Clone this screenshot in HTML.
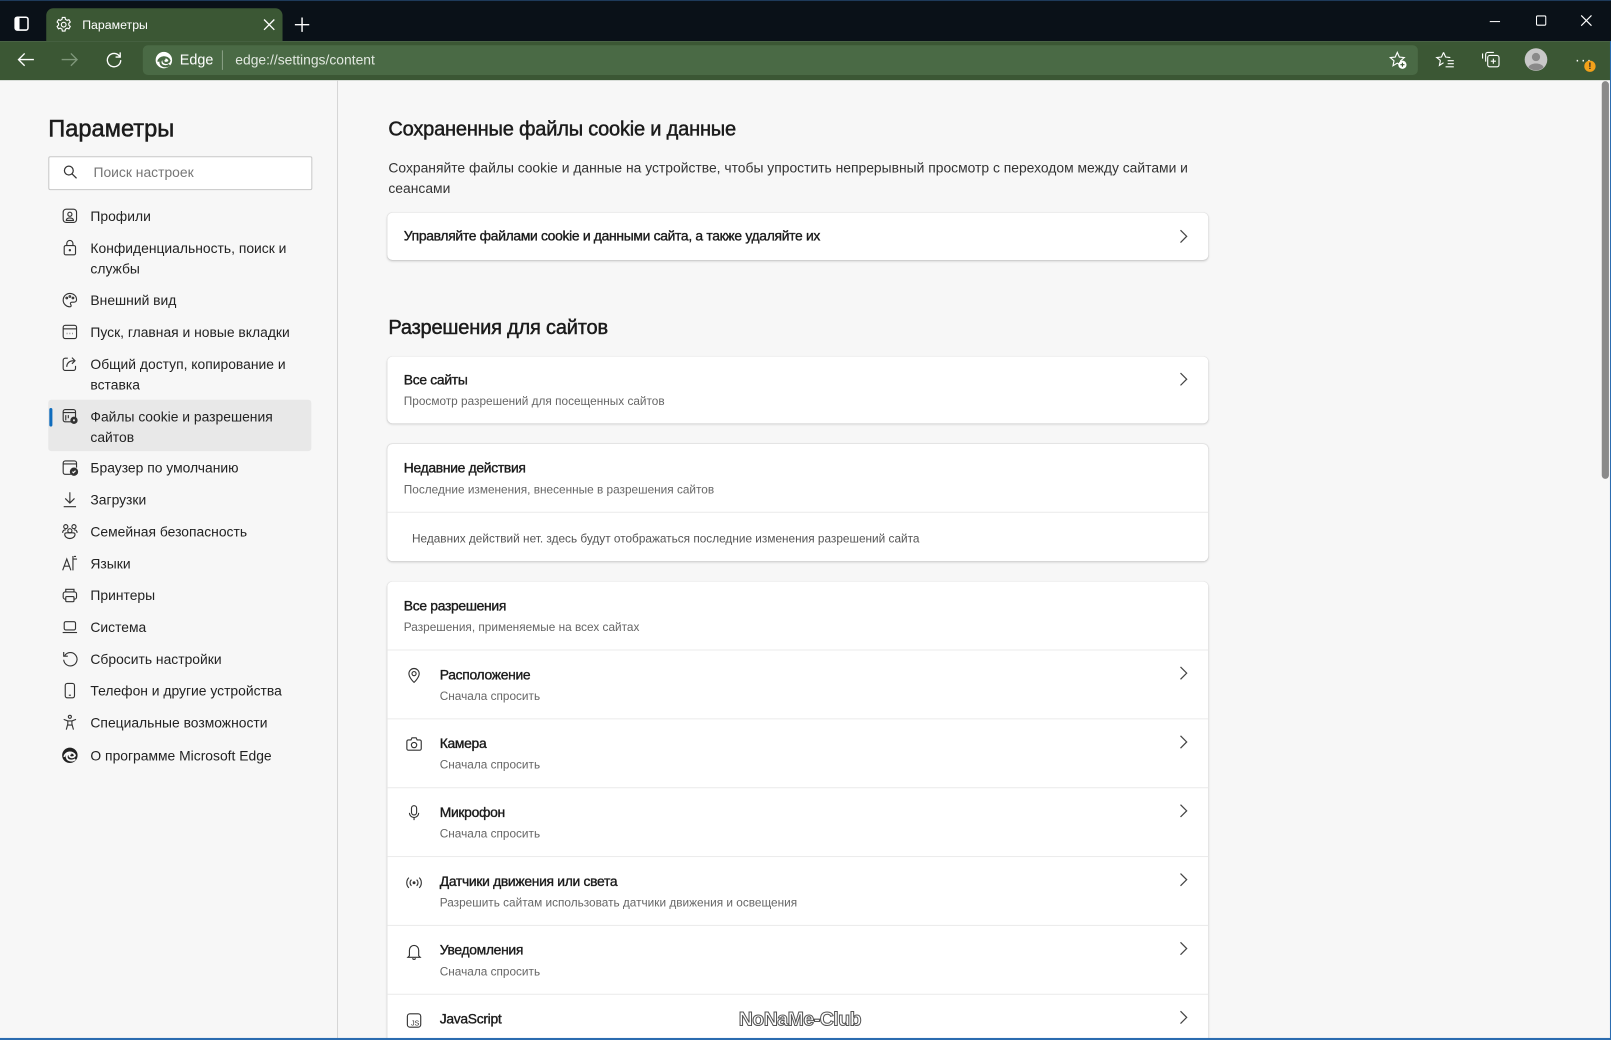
<!DOCTYPE html>
<html><head><meta charset="utf-8">
<style>
html,body{margin:0;padding:0;width:1611px;height:1040px;overflow:hidden;background:#f7f7f7}
#w{position:absolute;left:0;top:0;width:1568px;height:1012px;transform:scale(1.02742,1.02767);transform-origin:0 0;font-family:"Liberation Sans","DejaVu Sans",sans-serif;color:#1b1b1b;background:#f7f7f7;overflow:hidden}
.a{position:absolute}
.tb{left:0;top:0;width:1568px;height:40px;background:#0a1118;border-top:1px solid #1e3a5a;box-sizing:border-box}
.tool{left:0;top:40px;width:1568px;height:38px;background:#3b5734}
.tab{left:45px;top:8px;width:230px;height:32px;background:#3b5734;border-radius:7px 7px 0 0}
.addr{left:139px;top:44px;width:1241px;height:29px;background:#4a6a45;border-radius:5px}
.wt{color:#fff;font-size:12px}
.nav{left:88px;font-size:13.5px;color:#222;line-height:19.5px}
.ic{position:absolute;left:60px;width:16px;height:16px}
.card{position:absolute;left:377px;width:799px;background:#fff;border-radius:5px;box-shadow:0 1px 2px rgba(0,0,0,.14),0 0 1px rgba(0,0,0,.1)}
.t{position:absolute;font-size:13.5px;color:#1b1b1b;font-weight:400;-webkit-text-stroke:.35px #1b1b1b;letter-spacing:-.3px}
.s{position:absolute;font-size:11.5px;color:#666}
.hr{position:absolute;left:0;width:799px;height:1px;background:#ebebeb}
.chev{position:absolute;left:768px;width:12px;height:14px}
.h2{position:absolute;left:378px;font-size:19.5px;font-weight:400;-webkit-text-stroke:.45px #1b1b1b;color:#1b1b1b;letter-spacing:-.2px}
svg{overflow:visible}
</style></head><body><div id="w">
<div class="a tb"></div>
<div class="a tool"></div>
<div class="a tab"></div>
<svg class="a" style="left:14px;top:16px" width="14" height="14"><rect x=".75" y=".75" width="12.5" height="12.5" rx="2" fill="none" stroke="#fff" stroke-width="1.5"/><rect x="1" y="1" width="4" height="12" fill="#fff"/></svg>
<svg class="a" style="left:54px;top:16px" width="16" height="16" fill="none" stroke="#fff" stroke-width="1.1"><circle cx="8" cy="8" r="2.3"/><path d="M6.7 1h2.6l.4 1.9 1.6.9 1.8-.6 1.3 2.2-1.4 1.3v1.8l1.4 1.3-1.3 2.2-1.8-.6-1.6.9-.4 1.9H6.7l-.4-1.9-1.6-.9-1.8.6-1.3-2.2 1.4-1.3V6.7L1.6 5.4l1.3-2.2 1.8.6 1.6-.9z"/></svg>
<div class="a wt" style="left:80px;top:17px">Параметры</div>
<svg class="a" style="left:257px;top:19px" width="10" height="10" stroke="#fff" stroke-width="1.3"><path d="M0 0l10 10M10 0L0 10"/></svg>
<svg class="a" style="left:287px;top:17px" width="14" height="14" stroke="#fff" stroke-width="1.4"><path d="M7 0v14M0 7h14"/></svg>
<svg class="a" style="left:1450px;top:20px" width="10" height="2"><path d="M0 1h10" stroke="#fff"/></svg>
<svg class="a" style="left:1495px;top:15px" width="10" height="10"><rect x=".5" y=".5" width="9" height="9" rx="1" fill="none" stroke="#fff"/></svg>
<svg class="a" style="left:1539px;top:15px" width="10" height="10" stroke="#fff" stroke-width="1.1"><path d="M0 0l10 10M10 0L0 10"/></svg>
<svg class="a" style="left:17px;top:51px" width="16" height="14" fill="none" stroke="#fff" stroke-width="1.3"><path d="M16 7H1M7 1L1 7l6 6"/></svg>
<svg class="a" style="left:60px;top:51px" width="16" height="14" fill="none" stroke="#7f977a" stroke-width="1.3"><path d="M0 7h15M9 1l6 6-6 6"/></svg>
<svg class="a" style="left:103px;top:50px" width="16" height="16" fill="none" stroke="#fff" stroke-width="1.3"><path d="M13.5 5A6.5 6.5 0 1 0 14.5 8.5"/><path d="M14 1v4.5H9.5"/></svg>
<div class="a addr"></div>
<svg class="a" style="left:151px;top:50px" width="17" height="17"><circle cx="8.5" cy="8.5" r="8" fill="#fff"/><path d="M3 10c1-5 9-6 11-1-1 3-6 3-6 0 0-1 1-2 2-2-4-1-6 3-4 6 2 2 6 2 8 0" fill="none" stroke="#4a6a45" stroke-width="2"/></svg>
<div class="a" style="left:175px;top:50px;color:#fff;font-size:14px">Edge</div>
<div class="a" style="left:216px;top:49px;width:1px;height:19px;background:#8aa085"></div>
<div class="a" style="left:229px;top:51px;color:#e2e8e0;font-size:13.5px">edge://settings/content</div>
<svg class="a" style="left:1352px;top:50px" width="18" height="18" fill="none" stroke="#fff" stroke-width="1.1"><path d="M8 1l2 4.5 4.8.5-3.6 3.2 1 4.8L8 11.5 3.8 14l1-4.8L1.2 6 6 5.5z"/><circle cx="13" cy="13" r="4" fill="#fff" stroke="none"/><path d="M13 11v4M11 13h4" stroke="#3b5734"/></svg>
<svg class="a" style="left:1398px;top:50px" width="18" height="16" fill="none" stroke="#fff" stroke-width="1.1"><path d="M7 1l2 4.5 4.6.5M4 8.8l-1 4.8L7 11"/><path d="M7 1L5 5.5.4 6l3.6 2.8"/><path d="M11 9h6M11 12h6M9 15h8"/></svg>
<svg class="a" style="left:1442px;top:49px" width="18" height="18" fill="none" stroke="#fff" stroke-width="1.1"><path d="M4 11V4a2 2 0 0 1 2-2h6"/><path d="M1 8V3"/><rect x="6" y="5" width="11" height="11" rx="2"/><path d="M11.5 8v5M9 10.5h5"/></svg>
<svg class="a" style="left:1484px;top:47px" width="22" height="22"><circle cx="11" cy="11" r="11" fill="#c8c8c8"/><circle cx="11" cy="8.5" r="4" fill="#8a8a8a"/><path d="M3.5 18.5c2-5 13-5 15 0a11 11 0 0 1-15 0z" fill="#8a8a8a"/></svg>
<div class="a" style="left:1533px;top:55px;color:#fff;font-size:14px;letter-spacing:1px;line-height:6px">···</div>
<div class="a" style="left:1542px;top:59px;width:11px;height:11px;border-radius:50%;background:#f2a11a;color:#222;font-size:9px;font-weight:bold;text-align:center;line-height:11px">!</div>
<div class="a" style="left:328px;top:78px;width:1px;height:934px;background:#d6d6d6"></div>
<div class="a" style="left:47px;top:112px;font-size:23px;font-weight:400;-webkit-text-stroke:.5px #1b1b1b;color:#1b1b1b">Параметры</div>
<div class="a" style="left:47px;top:152px;width:255px;height:31px;background:#fff;border:1px solid #c8c8c8;border-radius:2px"></div>
<svg class="a" style="left:62px;top:161px" width="13" height="13" fill="none" stroke="#333" stroke-width="1.2"><circle cx="5" cy="5" r="4.3"/><path d="M8.2 8.2l4.3 4.3"/></svg>
<div class="a" style="left:91px;top:160px;font-size:13.5px;color:#767676">Поиск настроек</div>
<div class="a" style="left:47px;top:389px;width:256px;height:50px;background:#e8e8e8;border-radius:3px"></div>
<div class="a" style="left:48px;top:397px;width:3px;height:18px;background:#0f6cbd;border-radius:2px"></div>

<div class="a nav" style="top:201px">Профили</div>
<div class="a nav" style="top:232px">Конфиденциальность, поиск и<br>службы</div>
<div class="a nav" style="top:283px">Внешний вид</div>
<div class="a nav" style="top:314px">Пуск, главная и новые вкладки</div>
<div class="a nav" style="top:345px">Общий доступ, копирование и<br>вставка</div>
<div class="a nav" style="top:396px">Файлы cookie и разрешения<br>сайтов</div>
<div class="a nav" style="top:446px">Браузер по умолчанию</div>
<div class="a nav" style="top:477px">Загрузки</div>
<div class="a nav" style="top:508px">Семейная безопасность</div>
<div class="a nav" style="top:539px">Языки</div>
<div class="a nav" style="top:570px">Принтеры</div>
<div class="a nav" style="top:601px">Система</div>
<div class="a nav" style="top:632px">Сбросить настройки</div>
<div class="a nav" style="top:663px">Телефон и другие устройства</div>
<div class="a nav" style="top:694px">Специальные возможности</div>
<div class="a nav" style="top:726px">О программе Microsoft Edge</div>

<svg class="ic" style="top:202px" viewBox="0 0 16 16" fill="none" stroke="#333" stroke-width="1.1"><rect x="1.5" y="1.5" width="13" height="13" rx="3"/><circle cx="8" cy="6.5" r="2"/><path d="M4.5 12c1-2.5 6-2.5 7 0M4 12.5h8"/></svg>
<svg class="ic" style="top:233px" viewBox="0 0 16 16" fill="none" stroke="#333" stroke-width="1.1"><rect x="2.5" y="6" width="11" height="9" rx="1.5"/><path d="M5 6V4a3 3 0 0 1 6 0v2"/><circle cx="8" cy="10.5" r=".6" fill="#333"/></svg>
<svg class="ic" style="top:284px" viewBox="0 0 16 16" fill="none" stroke="#333" stroke-width="1.1"><path d="M8 1.5a6.5 6.5 0 1 0 0 13c1.5 0 1.5-1.5.8-2.3-.8-1 0-2.2 1.2-2.2h2c1.5 0 2.5-1 2.5-2.5C14.5 4 11.5 1.5 8 1.5z"/><circle cx="5" cy="6" r=".8"/><circle cx="8" cy="4.5" r=".8"/><circle cx="11" cy="6" r=".8"/></svg>
<svg class="ic" style="top:315px" viewBox="0 0 16 16" fill="none" stroke="#333" stroke-width="1.1"><rect x="1.5" y="1.5" width="13" height="13" rx="2"/><path d="M1.5 5h13"/><path d="M5 9.5h.5M7.8 9.5h.5M10.5 9.5h.5" stroke-width="1.5"/></svg>
<svg class="ic" style="top:346px" viewBox="0 0 16 16" fill="none" stroke="#333" stroke-width="1.1"><path d="M6 2.5H3.5a2 2 0 0 0-2 2v8a2 2 0 0 0 2 2h8a2 2 0 0 0 2-2V10"/><path d="M5 11c0-4 3-6 7-6M10 2l3 3-3 3"/></svg>
<svg class="ic" style="top:397px" viewBox="0 0 16 16" fill="none" stroke="#333" stroke-width="1.1"><rect x="1.5" y="1.5" width="12" height="12" rx="2"/><path d="M1.5 4.5h12M4 7v5M6.5 7v3"/><circle cx="12" cy="12" r="3" fill="#333"/><circle cx="12" cy="12" r="1" fill="#e8e8e8" stroke="none"/></svg>
<svg class="ic" style="top:447px" viewBox="0 0 16 16" fill="none" stroke="#333" stroke-width="1.1"><path d="M9 14.5H3.5a2 2 0 0 1-2-2v-9a2 2 0 0 1 2-2h9a2 2 0 0 1 2 2V8M1.5 4.5h13"/><circle cx="12" cy="12" r="3.5" fill="#333"/><path d="M10.5 12l1 1 2-2" stroke="#fff"/></svg>
<svg class="ic" style="top:478px" viewBox="0 0 16 16" fill="none" stroke="#333" stroke-width="1.1"><path d="M8 1v10M3.5 7l4.5 4.5L12.5 7M2 15h12"/></svg>
<svg class="ic" style="top:509px" viewBox="0 0 16 16" fill="none" stroke="#333" stroke-width="1.1"><circle cx="4" cy="3.5" r="2"/><circle cx="12" cy="3.5" r="2"/><circle cx="8" cy="7.5" r="2"/><path d="M1 9.5c0-2 1-3 3-3M15 9.5c0-2-1-3-3-3M3 11a5 4 0 0 0 10 0c0-1-1-1.5-2-1.5H5c-1 0-2 .5-2 1.5z"/></svg>
<svg class="ic" style="top:540px" viewBox="0 0 16 16" fill="none" stroke="#333" stroke-width="1.1"><path d="M1 15L5 4l4 11M2.5 11h5M11 1v14M11 4h4M12 1.5h2"/></svg>
<svg class="ic" style="top:571px" viewBox="0 0 16 16" fill="none" stroke="#333" stroke-width="1.1"><path d="M4 5V2.5h8V5"/><rect x="1.5" y="5" width="13" height="7" rx="2"/><rect x="4" y="9.5" width="8" height="5" rx="1" fill="#f7f7f7"/></svg>
<svg class="ic" style="top:602px" viewBox="0 0 16 16" fill="none" stroke="#333" stroke-width="1.1"><rect x="2.5" y="3" width="11" height="8" rx="1.5"/><path d="M1 13.5h14"/></svg>
<svg class="ic" style="top:633px" viewBox="0 0 16 16" fill="none" stroke="#333" stroke-width="1.1"><path d="M3 5a6.5 6.5 0 1 1-1 4"/><path d="M2 1.5v4h4"/></svg>
<svg class="ic" style="top:664px" viewBox="0 0 16 16" fill="none" stroke="#333" stroke-width="1.1"><rect x="3.5" y="1" width="9" height="14" rx="2"/><path d="M7 12.5h2"/></svg>
<svg class="ic" style="top:695px" viewBox="0 0 16 16" fill="none" stroke="#333" stroke-width="1.1"><circle cx="8" cy="2.5" r="1.5"/><path d="M2 5l4 1.5v3L4.5 15M14 5l-4 1.5v3l1.5 5.5M6 6.5h4M6 10.5h4"/></svg>
<svg class="ic" style="top:727px" viewBox="0 0 16 16"><circle cx="8" cy="8" r="7.5" fill="#222"/><path d="M2.5 9.5C3.5 4.5 11 3.5 13 8c-.8 2.5-5.5 2.5-5.5 0 0-1 1-1.8 2-1.8-3.5-1-5.8 2.5-3.8 5.5 2 2 5.5 1.8 7.5 0" fill="none" stroke="#f7f7f7" stroke-width="1.8"/></svg>

<div class="h2" style="top:115px">Сохраненные файлы cookie и данные</div>
<div class="a" style="left:378px;top:154px;width:800px;font-size:13.5px;line-height:20px;color:#333">Сохраняйте файлы cookie и данные на устройстве, чтобы упростить непрерывный просмотр с переходом между сайтами и сеансами</div>

<div class="card" style="top:207px;height:46px">
 <div class="t" style="left:16px;top:15px">Управляйте файлами cookie и данными сайта, а также удаляйте их</div>
 <svg class="chev" style="top:16px" viewBox="0 0 12 14" fill="none" stroke="#444" stroke-width="1.2"><path d="M4 1l6 6-6 6"/></svg>
</div>

<div class="h2" style="top:308px">Разрешения для сайтов</div>

<div class="card" style="top:347px;height:65px">
 <div class="t" style="left:16px;top:15px">Все сайты</div>
 <div class="s" style="left:16px;top:38px">Просмотр разрешений для посещенных сайтов</div>
 <svg class="chev" style="top:15px" viewBox="0 0 12 14" fill="none" stroke="#444" stroke-width="1.2"><path d="M4 1l6 6-6 6"/></svg>
</div>

<div class="card" style="top:432px;height:114px">
 <div class="t" style="left:16px;top:16px">Недавние действия</div>
 <div class="s" style="left:16px;top:39px">Последние изменения, внесенные в разрешения сайтов</div>
 <div class="hr" style="top:66px"></div>
 <div class="s" style="left:24px;top:87px;color:#555">Недавних действий нет. здесь будут отображаться последние изменения разрешений сайта</div>
</div>

<div class="card" style="top:566px;height:460px">
 <div class="t" style="left:16px;top:16px">Все разрешения</div>
 <div class="s" style="left:16px;top:39px">Разрешения, применяемые на всех сайтах</div>
 <div class="hr" style="top:66px"></div>
 <div class="t" style="left:51px;top:83px">Расположение</div>
 <div class="s" style="left:51px;top:106px">Сначала спросить</div>
 <svg class="chev" style="top:82px" viewBox="0 0 12 14" fill="none" stroke="#444" stroke-width="1.2"><path d="M4 1l6 6-6 6"/></svg>
 <svg class="a" style="left:18px;top:83px" width="16" height="16" fill="none" stroke="#333" stroke-width="1.1"><path d="M8 15s5-4.5 5-8.5a5 5 0 0 0-10 0C3 10.5 8 15 8 15z"/><circle cx="8" cy="6.5" r="2"/></svg>
 <div class="hr" style="top:133px"></div>
 <div class="t" style="left:51px;top:150px">Камера</div>
 <div class="s" style="left:51px;top:173px">Сначала спросить</div>
 <svg class="chev" style="top:149px" viewBox="0 0 12 14" fill="none" stroke="#444" stroke-width="1.2"><path d="M4 1l6 6-6 6"/></svg>
 <svg class="a" style="left:18px;top:150px" width="16" height="16" fill="none" stroke="#333" stroke-width="1.1"><path d="M1 5.5a1.5 1.5 0 0 1 1.5-1.5H5l1-2h4l1 2h2.5A1.5 1.5 0 0 1 15 5.5v7a1.5 1.5 0 0 1-1.5 1.5h-11A1.5 1.5 0 0 1 1 12.5z"/><circle cx="8" cy="9" r="2.6"/></svg>
 <div class="hr" style="top:200px"></div>
 <div class="t" style="left:51px;top:217px">Микрофон</div>
 <div class="s" style="left:51px;top:240px">Сначала спросить</div>
 <svg class="chev" style="top:216px" viewBox="0 0 12 14" fill="none" stroke="#444" stroke-width="1.2"><path d="M4 1l6 6-6 6"/></svg>
 <svg class="a" style="left:18px;top:217px" width="16" height="16" fill="none" stroke="#333" stroke-width="1.1"><rect x="5.5" y="1" width="5" height="9" rx="2.5"/><path d="M3.5 8a4.5 4.5 0 0 0 9 0M8 12.5V15"/></svg>
 <div class="hr" style="top:267px"></div>
 <div class="t" style="left:51px;top:284px">Датчики движения или света</div>
 <div class="s" style="left:51px;top:307px">Разрешить сайтам использовать датчики движения и освещения</div>
 <svg class="chev" style="top:283px" viewBox="0 0 12 14" fill="none" stroke="#444" stroke-width="1.2"><path d="M4 1l6 6-6 6"/></svg>
 <svg class="a" style="left:18px;top:285px" width="16" height="16" fill="none" stroke="#333" stroke-width="1.1"><path d="M3 3a7 7 0 0 0 0 10M5.5 5a4 4 0 0 0 0 6M13 3a7 7 0 0 1 0 10M10.5 5a4 4 0 0 1 0 6"/><circle cx="8" cy="8" r=".9" fill="#333"/></svg>
 <div class="hr" style="top:334px"></div>
 <div class="t" style="left:51px;top:351px">Уведомления</div>
 <div class="s" style="left:51px;top:374px">Сначала спросить</div>
 <svg class="chev" style="top:350px" viewBox="0 0 12 14" fill="none" stroke="#444" stroke-width="1.2"><path d="M4 1l6 6-6 6"/></svg>
 <svg class="a" style="left:18px;top:352px" width="16" height="16" fill="none" stroke="#333" stroke-width="1.1"><path d="M3.5 12V6.5a4.5 4.5 0 0 1 9 0V12l1.5 1.5H2z"/><path d="M6.5 14.5a1.6 1.6 0 0 0 3 0"/></svg>
 <div class="hr" style="top:401px"></div>
 <div class="t" style="left:51px;top:418px">JavaScript</div>
 <svg class="chev" style="top:417px" viewBox="0 0 12 14" fill="none" stroke="#444" stroke-width="1.2"><path d="M4 1l6 6-6 6"/></svg>
 <svg class="a" style="left:18px;top:419px" width="16" height="16" fill="none" stroke="#333" stroke-width="1.1"><rect x="1.5" y="1.5" width="13" height="13" rx="2.5"/><text x="5" y="13" font-size="7" fill="#333" stroke="none" font-family="Liberation Sans">JS</text></svg>
</div>

<div class="a" style="left:719px;top:982px;font-size:19px;font-weight:bold;color:#fff;-webkit-text-stroke:1px #555;letter-spacing:-.5px">NoNaMe-Club</div>

<div class="a" style="left:1559px;top:79px;width:7px;height:387px;background:#8a8a8a;border-radius:4px"></div>
<div class="a" style="left:1567px;top:40px;width:1px;height:972px;background:#2b6cb0"></div>
<div class="a" style="left:0;top:1010px;width:1568px;height:2px;background:#2b6cb0"></div>
</div></body></html>
